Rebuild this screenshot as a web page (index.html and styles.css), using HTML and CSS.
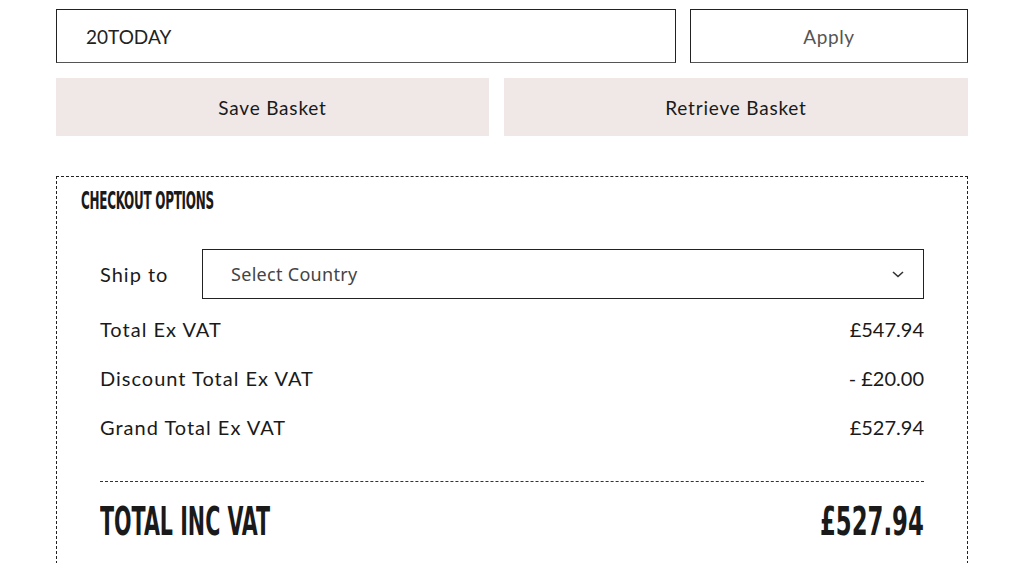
FILE: index.html
```html
<!DOCTYPE html>
<html lang="en">
  <head>
    <meta charset="UTF-8" />
    <title>Basket</title>
    <meta name="viewport" content="width=device-width, initial-scale=1.0" />
    <link rel="stylesheet" href="styles.css">
  </head>
  <body>
    <div class="basket">
      <div class="coupon">
        <input class="coupon-input" value="20TODAY" />
        <button class="coupon-apply">Apply</button>
      </div>

      <div class="basket-actions">
        <button class="save-btn">Save Basket</button>
        <button class="retrieve-btn">Retrieve Basket</button>
      </div>

      <div class="checkout">
        <h3 class="checkout-title"><span>Checkout Options</span></h3>
        <div class="checkout-body">
          <div class="ship-row">
            <label class="ship-label">Ship to</label>
            <div class="country-select">
              <span>Select Country</span>
              <svg width="14" height="10" viewBox="0 0 14 10">
                <path d="M2 3 L7 7.5 L12 3" fill="none" stroke="#333" stroke-width="1.6" />
              </svg>
            </div>
          </div>

          <div class="total-row">
            <span>Total Ex VAT</span>
            <span class="price">£547.94</span>
          </div>
          <div class="total-row">
            <span>Discount Total Ex VAT</span>
            <span class="price">- £20.00</span>
          </div>
          <div class="total-row">
            <span>Grand Total Ex VAT</span>
            <span class="price">£527.94</span>
          </div>

          <div class="grand-total">
            <span class="grand-label">Total Inc VAT</span>
            <span class="grand-price">£527.94</span>
          </div>
        </div>
      </div>
    </div>
  </body>
</html>
```

FILE: styles.css
```css
* {
  box-sizing: border-box;
}

body {
  margin: 0;
  background: #fff;
  color: #1a1a1a;
  font-family: "Lato", "Noto Sans", sans-serif;
}

.basket {
  width: 912px;
  margin: 0 auto;
  padding-top: 9px;
}

.coupon {
  display: flex;
  gap: 14px;
}

.coupon-input {
  flex: 1;
  height: 54px;
  padding: 0 29px;
  border: 1px solid #222;
  border-bottom-color: #555;
  font-family: inherit;
  font-size: 19px;
  color: #222;
  outline: none;
}

.coupon-apply {
  width: 278px;
  height: 54px;
  background: #fff;
  border: 1px solid #222;
  border-bottom-color: #555;
  font-family: inherit;
  font-size: 19px;
  letter-spacing: 0.6px;
  color: #555;
}

.basket-actions {
  display: flex;
  gap: 15px;
  margin-top: 15px;
}

.basket-actions button {
  height: 58px;
  border: none;
  background: #efe8e6;
  font-family: inherit;
  font-size: 19px;
  letter-spacing: 0.8px;
  color: #1a1a1a;
}

.save-btn {
  width: 433px;
}

.retrieve-btn {
  flex: 1;
}

.checkout {
  margin-top: 40px;
  border: 1px dashed #222;
  border-bottom: none;
  padding-bottom: 40px;
}

.checkout-title {
  margin: 0;
  padding: 9px 24px 0;
  height: 72px;
  font-family: "DejaVu Sans Condensed", sans-serif;
  font-weight: bold;
  font-size: 24px;
  line-height: 30px;
  text-transform: uppercase;
  letter-spacing: -0.5px;
}

.checkout-title span {
  display: inline-block;
  transform: scaleX(0.555);
  transform-origin: left;
  white-space: nowrap;
}

.checkout-body {
  padding: 0 43px;
}

.ship-row {
  display: flex;
  align-items: center;
  margin-bottom: 5px;
}

.ship-label {
  width: 102px;
  font-size: 20px;
  letter-spacing: 1px;
}

.country-select {
  flex: 1;
  height: 50px;
  display: flex;
  align-items: center;
  justify-content: space-between;
  padding: 0 18px 0 28px;
  border: 1px solid #222;
  font-family: "Noto Sans", sans-serif;
  font-size: 18px;
  letter-spacing: 0.3px;
  color: #444;
}

.total-row {
  display: flex;
  justify-content: space-between;
  align-items: center;
  height: 49px;
  font-size: 20px;
  letter-spacing: 1px;
}

.total-row .price {
  letter-spacing: 0;
}

.grand-total {
  display: flex;
  justify-content: space-between;
  align-items: center;
  margin-top: 30px;
  padding-top: 18px;
  border-top: 1px dashed #333;
  font-family: "DejaVu Sans Condensed", sans-serif;
  font-weight: bold;
  font-size: 39px;
  line-height: 44px;
  text-transform: uppercase;
}

.grand-label {
  display: inline-block;
  transform: scaleX(0.588);
  transform-origin: left;
  white-space: nowrap;
}

.grand-price {
  display: inline-block;
  transform: scaleX(0.65);
  transform-origin: right;
  white-space: nowrap;
}
```
